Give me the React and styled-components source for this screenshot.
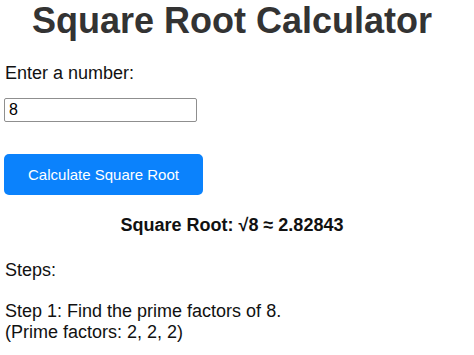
import React, { useState } from 'react'
import styled, { createGlobalStyle } from 'styled-components'

const GlobalStyle = createGlobalStyle`
    body {
        margin: 0;
        background: #fff;
        font-family: 'Liberation Sans', Arial, sans-serif;
    }
`

const Page = styled.div`
    padding: 1px 15px 0 5px;
    color: #111;
    font-size: 18px;
`

const Title = styled.h1`
    margin: 0;
    font-size: 36px;
    line-height: 40px;
    font-weight: 700;
    color: #333;
    text-align: center;
`

const Label = styled.label`
    display: block;
    margin-top: 22px;
    line-height: 21px;
`

const NumberInput = styled.input`
    display: block;
    box-sizing: border-box;
    margin: 14px 0 0 -1px;
    width: 193px;
    height: 24px;
    padding: 0 4px;
    border: 1px solid #8f8f8f;
    border-radius: 2px;
    font-family: 'Liberation Sans', Arial, sans-serif;
    font-size: 16px;
    color: #000;
    outline: none;
`

const Button = styled.button`
    display: block;
    margin: 32px 0 0 -1px;
    width: 199px;
    height: 41px;
    border: none;
    border-radius: 5px;
    background: #0b82fc;
    color: #fff;
    font-family: 'Liberation Sans', Arial, sans-serif;
    font-size: 15px;
    cursor: pointer;
`

const Result = styled.div`
    margin-top: 20px;
    line-height: 21px;
    font-weight: 700;
    text-align: center;
`

const Steps = styled.div`
    margin-top: 24px;
    line-height: 21px;
`

const StepText = styled.p`
    margin: 20px 0 0;
    line-height: 21px;
`

const primeFactors = (n) => {
    const out = []
    let x = n
    for (let d = 2; d * d <= x; d++) {
        while (x % d === 0) {
            out.push(d)
            x /= d
        }
    }
    if (x > 1) out.push(x)
    return out
}

const App = () => {
    const [value, setValue] = useState('8')
    const n = Number(value)
    const root = Math.sqrt(n)
    const factors = primeFactors(n)

    return (
        <Page>
            <GlobalStyle />
            <Title>Square Root Calculator</Title>
            <Label htmlFor="num">Enter a number:</Label>
            <NumberInput id="num" type="text" value={value} onChange={(e) => setValue(e.target.value)} />
            <Button>Calculate Square Root</Button>
            <Result>Square Root: √{value} ≈ {Number(root.toFixed(5))}</Result>
            <Steps>Steps:</Steps>
            <StepText>
                Step 1: Find the prime factors of {value}.
                <br />
                (Prime factors: {factors.join(', ')})
            </StepText>
        </Page>
    )
}

export default App
